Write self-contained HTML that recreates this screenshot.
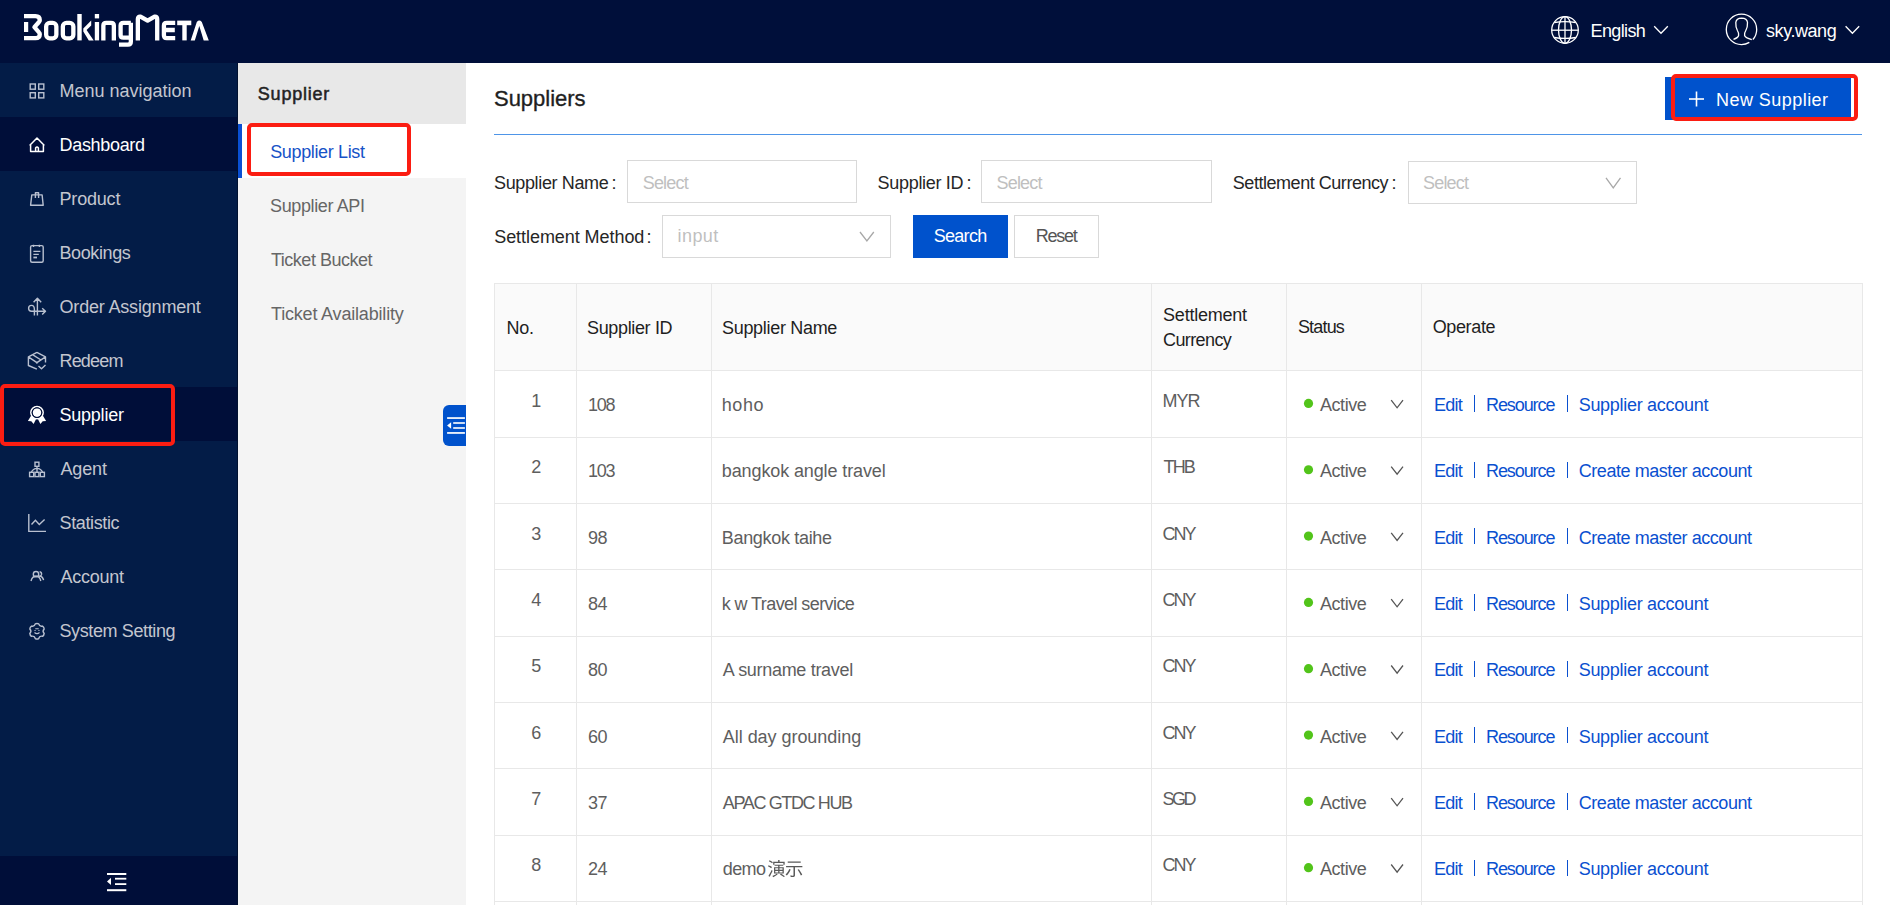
<!DOCTYPE html><html><head><meta charset="utf-8"><style>
html,body{margin:0;padding:0;}
body{width:1890px;height:905px;overflow:hidden;position:relative;background:#fff;font-family:"Liberation Sans",sans-serif;}
.t{position:absolute;white-space:nowrap;}
.r{position:absolute;box-sizing:border-box;}
svg{position:absolute;overflow:visible;}
</style></head><body>
<div class="r" style="left:0px;top:0px;width:1890px;height:63px;background:#000f3a"></div>
<svg style="left:0;top:0" width="240" height="63" viewBox="0 0 240 63">
<g fill="none" stroke="#fff" stroke-width="4.3" stroke-linejoin="round">
<path d="M24,16.2 H35.5 Q39.8,16.2 39.8,20.3 Q39.8,21.3 39,22 L34.4,27.2 L39,32.4 Q39.8,33.2 39.8,34.2 Q39.8,38.2 35.5,38.2 H24"/>
<rect x="46.15" y="22.85" width="10.2" height="15.5" rx="3.6"/>
<rect x="62.85" y="22.85" width="10.5" height="15.5" rx="3.6"/>
<path d="M103.35,40.4 V25.6 Q103.35,22.8 106.2,22.8 H111 Q113.85,22.8 113.85,25.6 V40.4"/>
<path d="M130.85,22.8 H123.4 Q120.6,22.8 120.6,25.6 V35 Q120.6,37.7 123.4,37.7 H130.85 M130.85,22.8 V41.8 Q130.85,44.6 128,44.6 H119"/>
<path d="M137.85,40.4 V19 Q137.85,16.2 140.5,16.6 L147.6,20.6 L154.6,16.6 Q157.2,16.2 157.2,19 V40.4"/>
<path d="M175.2,22.9 H166.7 Q163.9,22.9 163.9,25.7 V35.3 Q163.9,38.1 166.7,38.1 H175.2 M163.9,30 H174.8"/>
</g>
<g fill="#fff">
<rect x="24" y="22" width="4.2" height="10"/>
<rect x="77.3" y="14" width="4.4" height="26.4"/>
<polygon points="91.2,20.6 91.2,25.4 86.6,30 93.7,40.4 88.8,40.4 83.3,31.6 83.3,28.4"/>
<rect x="94.8" y="14" width="4.3" height="4.4"/>
<rect x="94.8" y="22" width="4.3" height="18.4"/>
<rect x="177.2" y="20.6" width="14.1" height="4.6"/>
<rect x="182.3" y="23" width="4.4" height="17.4"/>
<path d="M190.7,40.5 H194.8 L199.3,26 L203.7,40.5 H208.8 L201.8,22 Q199.3,19.2 196.8,22 Z"/>
</g></svg>
<svg style="left:0;top:0" width="1890" height="63" viewBox="0 0 1890 63">
<g fill="none" stroke="#fff" stroke-width="1.3">
<circle cx="1565" cy="30" r="13.3"/>
<ellipse cx="1565" cy="30" rx="6.5" ry="13.3"/>
<line x1="1565" y1="16.7" x2="1565" y2="43.3"/>
<line x1="1551.7" y1="30.2" x2="1578.3" y2="30.2"/>
<path d="M1554.2,22.5 Q1565,20.8 1575.8,22.5"/>
<path d="M1554.2,37.5 Q1565,39.2 1575.8,37.5"/>
<path d="M1654.2,26.3 L1661,33.3 L1667.8,26.3"/>
<circle cx="1741.5" cy="29.4" r="15.2" stroke-dasharray="11 4.5 100"/>
<path d="M1733.5,39.3 Q1738,37.8 1738.6,35.5 Q1739,33 1737.4,30.5 Q1735.6,27.5 1735.8,22.5 Q1736.3,18.2 1741.6,18.1 Q1747,18.2 1747.5,22.5 Q1747.7,27.5 1745.8,30.5 Q1744.2,33 1744.6,35.5 Q1745.3,37.8 1751.8,39.7"/>
<path d="M1845.6,26.3 L1852.4,33.3 L1859.2,26.3"/>
</g></svg>
<div class="t" style="left:1590.50px;top:21.66px;font-size:18px;line-height:18px;color:#fff;font-weight:normal;letter-spacing:-0.617px;">English</div>
<div class="t" style="left:1766.00px;top:21.56px;font-size:18px;line-height:18px;color:#fff;font-weight:normal;letter-spacing:-0.429px;">sky.wang</div>
<div class="r" style="left:0px;top:63px;width:238px;height:842px;background:#031c47"></div>
<div class="r" style="left:237px;top:63px;width:1px;height:842px;background:#01112f"></div>
<div class="r" style="left:0px;top:117px;width:237px;height:54px;background:#000e39"></div>
<div class="r" style="left:0px;top:387px;width:237px;height:54px;background:#000e39"></div>
<div class="r" style="left:0px;top:856px;width:237px;height:49px;background:#000e39"></div>
<div class="t" style="left:59.50px;top:82.06px;font-size:18px;line-height:18px;color:#c3c6cf;font-weight:normal;letter-spacing:-0.014px;">Menu navigation</div>
<div class="t" style="left:59.50px;top:136.06px;font-size:18px;line-height:18px;color:#fff;font-weight:normal;letter-spacing:-0.312px;">Dashboard</div>
<div class="t" style="left:59.50px;top:190.06px;font-size:18px;line-height:18px;color:#c3c6cf;font-weight:normal;letter-spacing:-0.183px;">Product</div>
<div class="t" style="left:59.50px;top:244.06px;font-size:18px;line-height:18px;color:#c3c6cf;font-weight:normal;letter-spacing:-0.400px;">Bookings</div>
<div class="t" style="left:59.50px;top:298.06px;font-size:18px;line-height:18px;color:#c3c6cf;font-weight:normal;letter-spacing:-0.180px;">Order Assignment</div>
<div class="t" style="left:59.50px;top:352.06px;font-size:18px;line-height:18px;color:#c3c6cf;font-weight:normal;letter-spacing:-0.820px;">Redeem</div>
<div class="t" style="left:59.50px;top:406.06px;font-size:18px;line-height:18px;color:#fff;font-weight:normal;letter-spacing:-0.229px;">Supplier</div>
<div class="t" style="left:60.50px;top:460.06px;font-size:18px;line-height:18px;color:#c3c6cf;font-weight:normal;letter-spacing:-0.150px;">Agent</div>
<div class="t" style="left:59.50px;top:514.06px;font-size:18px;line-height:18px;color:#c3c6cf;font-weight:normal;letter-spacing:-0.363px;">Statistic</div>
<div class="t" style="left:60.50px;top:568.06px;font-size:18px;line-height:18px;color:#c3c6cf;font-weight:normal;letter-spacing:-0.267px;">Account</div>
<div class="t" style="left:59.50px;top:622.06px;font-size:18px;line-height:18px;color:#c3c6cf;font-weight:normal;letter-spacing:-0.385px;">System Setting</div>
<svg style="left:0;top:0" width="238" height="905" viewBox="0 0 238 905">
<g fill="none" stroke="#b9c0d0" stroke-width="1.4">
<rect x="30.2" y="84" width="5.1" height="5.2"/><rect x="38.7" y="84" width="5.1" height="5.2"/>
<rect x="30.2" y="92.7" width="5.1" height="5.2"/><rect x="38.7" y="92.7" width="5.1" height="5.2"/>
</g>
<g fill="none" stroke="#fff" stroke-width="1.5" stroke-linejoin="round">
<path d="M29.6,145.5 L37,138 L44.4,145.5 M30.6,144.5 V151.6 H43.4 V144.5 M35.6,151.6 V148 Q37,146 38.4,148 V151.6"/>
</g>
<g fill="none" stroke="#b9c0d0" stroke-width="1.4" stroke-linejoin="round">
<path d="M31.8,194.9 H42.1 L43.2,205.2 H30.6 Z M35.4,198 V192.7 H38.6 V198"/>
<rect x="30.6" y="245.6" width="12.6" height="16.6" rx="1.5"/>
<path d="M33.4,251.4 H40.4 M33.4,254.4 H38.8"/><path d="M33.4,257.5 H37" stroke-width="1.8"/>
<path d="M33.5,244.8 V247 M39.4,244.8 V247"/>
<path d="M37.4,315.5 V298.5 M33.6,302.3 L37.4,298.3 L41.2,302.3 M34.4,315.5 V309.5 Q34.4,305.4 31.5,305.4 Q28.6,305.4 28.6,308.3 Q28.6,311.3 31.5,311.3 H45.5 M42.2,308.2 L45.5,311.3 L42.2,314.5"/>
<path d="M36.9,352.3 L28.4,356.9 V365.5 L36.9,369.2 M36.9,352.3 L45.5,356.9 V362.6 M28.4,356.9 L36.9,362.6 L45.5,356.9 M36.9,362.6 V363.8 M32.5,354.7 L41,360 M38.5,366 L41.5,368.8 L45.5,365"/>
</g>
<g fill="#fff">
<path d="M31.2,415.6 L27.9,420.9 L31.3,421.3 L33.6,424 L36,419.2 Z M42.8,415.6 L46.1,420.9 L42.7,421.3 L40.4,424 L38,419.2 Z"/>
<circle cx="37" cy="412.6" r="4.3"/>
</g>
<g fill="none" stroke="#fff" stroke-width="1.6"><circle cx="37" cy="412.6" r="6.15"/></g>
<g fill="none" stroke="#000e39" stroke-width="0.9"><circle cx="37" cy="412.6" r="4.85"/></g>
<g fill="none" stroke="#b9c0d0" stroke-width="1.4">
<rect x="35" y="462.2" width="3.9" height="4.1"/>
<rect x="29.6" y="472.3" width="4.1" height="4.3"/><rect x="35" y="472.3" width="3.9" height="4.3"/><rect x="40.3" y="472.3" width="4.1" height="4.3"/>
<path d="M37,466.3 V472.3 M31.4,472.3 Q33,468.5 37,468.4 Q41,468.5 42.6,472.3"/>
<path d="M28.8,514 V531.4 H46"/><path d="M31.5,524.5 L35.4,520.2 L39.3,524.5 L44.6,519.5"/>
<path d="M31,581 Q32.2,576.3 36,576 Q39.8,576.3 40.8,581 M39.2,576 Q42.7,576.3 43.6,580.2"/>
<circle cx="36" cy="574.2" r="2.7"/><path d="M39.6,571.6 Q42,572.2 41.5,574.7 Q41.2,576 39.7,576.2"/>
<path d="M35.31,623.89 Q37.00,623.00 38.69,623.89 Q39.50,626.87 42.49,626.09 Q44.10,627.10 44.17,629.01 Q42.00,631.20 44.17,633.39 Q44.10,635.30 42.49,636.31 Q39.50,635.53 38.69,638.51 Q37.00,639.40 35.31,638.51 Q34.50,635.53 31.51,636.31 Q29.90,635.30 29.83,633.39 Q32.00,631.20 29.83,629.01 Q29.90,627.10 31.51,626.09 Q34.50,626.87 35.31,623.89 Z"/>
<path d="M35.3,628.7 H38.7 M34.5,630.5 H35.6 M38.4,630.5 H39.5 M34.5,632.5 Q37,634.8 39.5,632.5" stroke-width="1.1"/>
</g>
<g fill="#fff">
<rect x="107" y="873" width="19.3" height="2"/><rect x="115" y="877.8" width="11.3" height="1.8"/>
<rect x="115" y="883.2" width="11.3" height="1.8"/><rect x="107" y="889.2" width="19.3" height="2"/>
<polygon points="107,881.4 111,877.8 111,885"/>
</g>
</svg>
<div class="r" style="left:0px;top:384px;width:175px;height:62px;border:4.7px solid #fb1d12;border-radius:5px;"></div>
<div class="r" style="left:238px;top:63px;width:228px;height:842px;background:#f4f4f4"></div>
<div class="r" style="left:238px;top:63px;width:228px;height:60.5px;background:#e8e8e8"></div>
<div class="r" style="left:238px;top:123.5px;width:228px;height:54px;background:#fff"></div>
<div class="r" style="left:238px;top:123.5px;width:4px;height:54px;background:#0a4fd3"></div>
<div class="t" style="left:257.80px;top:84.96px;font-size:18px;line-height:18px;color:#222;font-weight:normal;letter-spacing:0.786px;-webkit-text-stroke:0.5px #222;">Supplier</div>
<div class="t" style="left:270.20px;top:142.56px;font-size:18px;line-height:18px;color:#1652c7;font-weight:normal;letter-spacing:-0.358px;">Supplier List</div>
<div class="t" style="left:270.00px;top:196.96px;font-size:18px;line-height:18px;color:#666;font-weight:normal;letter-spacing:-0.373px;">Supplier API</div>
<div class="t" style="left:271.00px;top:250.96px;font-size:18px;line-height:18px;color:#666;font-weight:normal;letter-spacing:-0.492px;">Ticket Bucket</div>
<div class="t" style="left:271.00px;top:304.96px;font-size:18px;line-height:18px;color:#666;font-weight:normal;letter-spacing:-0.183px;">Ticket Availability</div>
<div class="r" style="left:247px;top:123px;width:164px;height:53px;border:4.7px solid #fb1d12;border-radius:5px;"></div>
<div class="r" style="left:443px;top:405px;width:23px;height:41px;background:#0052cc;border-radius:6px 0 0 6px;"></div>
<svg style="left:0;top:0" width="470" height="460" viewBox="0 0 470 460"><g fill="#fff">
<rect x="447.1" y="417.2" width="17.8" height="1.7"/><rect x="453.2" y="422.2" width="11.7" height="1.6"/>
<rect x="453.2" y="427.2" width="11.7" height="1.6"/><rect x="447.1" y="432.1" width="17.8" height="1.7"/>
<polygon points="447.1,425.5 451.1,422.2 451.1,428.8"/></g></svg>
<div class="t" style="left:494.00px;top:88.08px;font-size:22px;line-height:22px;color:#1f1f1f;font-weight:normal;letter-spacing:-0.025px;-webkit-text-stroke:0.35px #1f1f1f;">Suppliers</div>
<div class="r" style="left:494px;top:134px;width:1368px;height:1px;background:#4e95e8"></div>
<div class="r" style="left:1665px;top:77px;width:185.5px;height:43px;background:#0052cc"></div>
<svg style="left:0;top:0" width="1890" height="140" viewBox="0 0 1890 140"><g stroke="#fff" stroke-width="1.6">
<line x1="1689" y1="99" x2="1704" y2="99"/><line x1="1696.5" y1="91.5" x2="1696.5" y2="106.5"/></g></svg>
<div class="t" style="left:1716.00px;top:90.96px;font-size:18px;line-height:18px;color:#fff;font-weight:normal;letter-spacing:0.455px;">New Supplier</div>
<div class="r" style="left:1671px;top:74px;width:187px;height:47px;border:4.7px solid #fb1d12;border-radius:5px;"></div>
<div class="t" style="left:494.00px;top:173.76px;font-size:18px;line-height:18px;color:#262626;font-weight:normal;letter-spacing:-0.358px;">Supplier Name</div>
<div class="t" style="left:611.50px;top:173.76px;font-size:18px;line-height:18px;color:#262626;font-weight:normal;letter-spacing:0.000px;">:</div>
<div class="r" style="left:627px;top:160px;width:230px;height:43px;border:1px solid #d9d9d9"></div>
<div class="t" style="left:642.70px;top:173.76px;font-size:18px;line-height:18px;color:#bfbfbf;font-weight:normal;letter-spacing:-0.800px;">Select</div>
<div class="t" style="left:877.60px;top:173.76px;font-size:18px;line-height:18px;color:#262626;font-weight:normal;letter-spacing:-0.310px;">Supplier ID</div>
<div class="t" style="left:966.50px;top:173.76px;font-size:18px;line-height:18px;color:#262626;font-weight:normal;letter-spacing:0.000px;">:</div>
<div class="r" style="left:981px;top:160px;width:231px;height:43px;border:1px solid #d9d9d9"></div>
<div class="t" style="left:996.50px;top:173.76px;font-size:18px;line-height:18px;color:#bfbfbf;font-weight:normal;letter-spacing:-0.800px;">Select</div>
<div class="t" style="left:1232.80px;top:173.76px;font-size:18px;line-height:18px;color:#262626;font-weight:normal;letter-spacing:-0.461px;">Settlement Currency</div>
<div class="t" style="left:1391.60px;top:173.76px;font-size:18px;line-height:18px;color:#262626;font-weight:normal;letter-spacing:0.000px;">:</div>
<div class="r" style="left:1408px;top:161px;width:229px;height:43px;border:1px solid #d9d9d9"></div>
<div class="t" style="left:1423.00px;top:174.26px;font-size:18px;line-height:18px;color:#bfbfbf;font-weight:normal;letter-spacing:-0.800px;">Select</div>
<div class="t" style="left:494.20px;top:227.66px;font-size:18px;line-height:18px;color:#262626;font-weight:normal;letter-spacing:-0.056px;">Settlement Method</div>
<div class="t" style="left:646.60px;top:227.66px;font-size:18px;line-height:18px;color:#262626;font-weight:normal;letter-spacing:0.000px;">:</div>
<div class="r" style="left:662px;top:215px;width:229px;height:43px;border:1px solid #d9d9d9"></div>
<div class="t" style="left:677.50px;top:227.06px;font-size:18px;line-height:18px;color:#bfbfbf;font-weight:normal;letter-spacing:0.450px;">input</div>
<div class="r" style="left:913px;top:215px;width:95px;height:43px;background:#0052cc"></div>
<div class="t" style="left:933.70px;top:227.06px;font-size:18px;line-height:18px;color:#fff;font-weight:normal;letter-spacing:-0.700px;">Search</div>
<div class="r" style="left:1014px;top:215px;width:85px;height:43px;border:1px solid #d9d9d9"></div>
<div class="t" style="left:1035.70px;top:227.06px;font-size:18px;line-height:18px;color:#555;font-weight:normal;letter-spacing:-1.250px;">Reset</div>
<div class="r" style="left:494px;top:283px;width:1368.2px;height:87.4px;background:#fafafa"></div>
<div class="r" style="left:494px;top:283px;width:1368.2px;height:1px;background:#e8e8e8"></div>
<div class="r" style="left:494px;top:370.4px;width:1368.2px;height:1px;background:#e8e8e8"></div>
<div class="r" style="left:494px;top:436.73px;width:1368.2px;height:1px;background:#e8e8e8"></div>
<div class="r" style="left:494px;top:503.06px;width:1368.2px;height:1px;background:#e8e8e8"></div>
<div class="r" style="left:494px;top:569.39px;width:1368.2px;height:1px;background:#e8e8e8"></div>
<div class="r" style="left:494px;top:635.72px;width:1368.2px;height:1px;background:#e8e8e8"></div>
<div class="r" style="left:494px;top:702.05px;width:1368.2px;height:1px;background:#e8e8e8"></div>
<div class="r" style="left:494px;top:768.38px;width:1368.2px;height:1px;background:#e8e8e8"></div>
<div class="r" style="left:494px;top:834.71px;width:1368.2px;height:1px;background:#e8e8e8"></div>
<div class="r" style="left:494px;top:901.04px;width:1368.2px;height:1px;background:#e8e8e8"></div>
<div class="r" style="left:493.5px;top:283px;width:1px;height:622px;background:#e8e8e8"></div>
<div class="r" style="left:576.0px;top:283px;width:1px;height:622px;background:#e8e8e8"></div>
<div class="r" style="left:710.8px;top:283px;width:1px;height:622px;background:#e8e8e8"></div>
<div class="r" style="left:1151.0px;top:283px;width:1px;height:622px;background:#e8e8e8"></div>
<div class="r" style="left:1285.8px;top:283px;width:1px;height:622px;background:#e8e8e8"></div>
<div class="r" style="left:1420.9px;top:283px;width:1px;height:622px;background:#e8e8e8"></div>
<div class="r" style="left:1861.7px;top:283px;width:1px;height:622px;background:#e8e8e8"></div>
<div class="t" style="left:506.40px;top:318.96px;font-size:18px;line-height:18px;color:#1f1f1f;font-weight:normal;letter-spacing:-0.200px;">No.</div>
<div class="t" style="left:587.00px;top:318.96px;font-size:18px;line-height:18px;color:#1f1f1f;font-weight:normal;letter-spacing:-0.350px;">Supplier ID</div>
<div class="t" style="left:722.00px;top:318.96px;font-size:18px;line-height:18px;color:#1f1f1f;font-weight:normal;letter-spacing:-0.308px;">Supplier Name</div>
<div class="t" style="left:1163.10px;top:305.56px;font-size:18px;line-height:18px;color:#1f1f1f;font-weight:normal;letter-spacing:-0.233px;">Settlement</div>
<div class="t" style="left:1163.00px;top:331.46px;font-size:18px;line-height:18px;color:#1f1f1f;font-weight:normal;letter-spacing:-0.600px;">Currency</div>
<div class="t" style="left:1297.90px;top:318.46px;font-size:18px;line-height:18px;color:#1f1f1f;font-weight:normal;letter-spacing:-0.820px;">Status</div>
<div class="t" style="left:1432.70px;top:318.46px;font-size:18px;line-height:18px;color:#1f1f1f;font-weight:normal;letter-spacing:-0.367px;">Operate</div>
<div class="t" style="left:495px;width:82.5px;text-align:center;top:391.86px;font-size:18px;line-height:18px;color:#5e5e5e">1</div>
<div class="t" style="left:588.00px;top:395.86px;font-size:18px;line-height:18px;color:#5e5e5e;font-weight:normal;letter-spacing:-1.300px;">108</div>
<div class="t" style="left:721.80px;top:395.86px;font-size:18px;line-height:18px;color:#5e5e5e;font-weight:normal;letter-spacing:0.567px;">hoho</div>
<div class="t" style="left:1162.50px;top:391.86px;font-size:18px;line-height:18px;color:#5e5e5e;font-weight:normal;letter-spacing:-1.000px;">MYR</div>
<div class="t" style="left:1320.00px;top:395.86px;font-size:18px;line-height:18px;color:#5e5e5e;font-weight:normal;letter-spacing:-0.460px;">Active</div>
<div class="t" style="left:1433.90px;top:395.86px;font-size:18px;line-height:18px;color:#0a50d0;font-weight:normal;letter-spacing:-0.700px;">Edit</div>
<div class="r" style="left:1473.8px;top:395.4px;width:1.5px;height:16.3px;background:#0a50d0"></div>
<div class="t" style="left:1486.00px;top:395.86px;font-size:18px;line-height:18px;color:#0a50d0;font-weight:normal;letter-spacing:-1.086px;">Resource</div>
<div class="r" style="left:1566.5px;top:395.4px;width:1.5px;height:16.3px;background:#0a50d0"></div>
<div class="t" style="left:1578.70px;top:395.86px;font-size:18px;line-height:18px;color:#0a50d0;font-weight:normal;letter-spacing:-0.293px;">Supplier account</div>
<div class="t" style="left:495px;width:82.5px;text-align:center;top:458.19px;font-size:18px;line-height:18px;color:#5e5e5e">2</div>
<div class="t" style="left:588.00px;top:462.19px;font-size:18px;line-height:18px;color:#5e5e5e;font-weight:normal;letter-spacing:-1.300px;">103</div>
<div class="t" style="left:721.80px;top:462.19px;font-size:18px;line-height:18px;color:#5e5e5e;font-weight:normal;letter-spacing:-0.116px;">bangkok angle travel</div>
<div class="t" style="left:1163.50px;top:458.19px;font-size:18px;line-height:18px;color:#5e5e5e;font-weight:normal;letter-spacing:-1.850px;">THB</div>
<div class="t" style="left:1320.00px;top:462.19px;font-size:18px;line-height:18px;color:#5e5e5e;font-weight:normal;letter-spacing:-0.460px;">Active</div>
<div class="t" style="left:1433.90px;top:462.19px;font-size:18px;line-height:18px;color:#0a50d0;font-weight:normal;letter-spacing:-0.700px;">Edit</div>
<div class="r" style="left:1473.8px;top:461.73px;width:1.5px;height:16.3px;background:#0a50d0"></div>
<div class="t" style="left:1486.00px;top:462.19px;font-size:18px;line-height:18px;color:#0a50d0;font-weight:normal;letter-spacing:-1.086px;">Resource</div>
<div class="r" style="left:1566.5px;top:461.73px;width:1.5px;height:16.3px;background:#0a50d0"></div>
<div class="t" style="left:1578.70px;top:462.19px;font-size:18px;line-height:18px;color:#0a50d0;font-weight:normal;letter-spacing:-0.435px;">Create master account</div>
<div class="t" style="left:495px;width:82.5px;text-align:center;top:524.52px;font-size:18px;line-height:18px;color:#5e5e5e">3</div>
<div class="t" style="left:588.00px;top:528.52px;font-size:18px;line-height:18px;color:#5e5e5e;font-weight:normal;letter-spacing:-0.500px;">98</div>
<div class="t" style="left:721.80px;top:528.52px;font-size:18px;line-height:18px;color:#5e5e5e;font-weight:normal;letter-spacing:-0.317px;">Bangkok taihe</div>
<div class="t" style="left:1162.50px;top:524.52px;font-size:18px;line-height:18px;color:#5e5e5e;font-weight:normal;letter-spacing:-2.000px;">CNY</div>
<div class="t" style="left:1320.00px;top:528.52px;font-size:18px;line-height:18px;color:#5e5e5e;font-weight:normal;letter-spacing:-0.460px;">Active</div>
<div class="t" style="left:1433.90px;top:528.52px;font-size:18px;line-height:18px;color:#0a50d0;font-weight:normal;letter-spacing:-0.700px;">Edit</div>
<div class="r" style="left:1473.8px;top:528.06px;width:1.5px;height:16.3px;background:#0a50d0"></div>
<div class="t" style="left:1486.00px;top:528.52px;font-size:18px;line-height:18px;color:#0a50d0;font-weight:normal;letter-spacing:-1.086px;">Resource</div>
<div class="r" style="left:1566.5px;top:528.06px;width:1.5px;height:16.3px;background:#0a50d0"></div>
<div class="t" style="left:1578.70px;top:528.52px;font-size:18px;line-height:18px;color:#0a50d0;font-weight:normal;letter-spacing:-0.435px;">Create master account</div>
<div class="t" style="left:495px;width:82.5px;text-align:center;top:590.85px;font-size:18px;line-height:18px;color:#5e5e5e">4</div>
<div class="t" style="left:588.00px;top:594.85px;font-size:18px;line-height:18px;color:#5e5e5e;font-weight:normal;letter-spacing:-0.500px;">84</div>
<div class="t" style="left:721.80px;top:594.85px;font-size:18px;line-height:18px;color:#5e5e5e;font-weight:normal;letter-spacing:-0.588px;">k w Travel service</div>
<div class="t" style="left:1162.50px;top:590.85px;font-size:18px;line-height:18px;color:#5e5e5e;font-weight:normal;letter-spacing:-2.000px;">CNY</div>
<div class="t" style="left:1320.00px;top:594.85px;font-size:18px;line-height:18px;color:#5e5e5e;font-weight:normal;letter-spacing:-0.460px;">Active</div>
<div class="t" style="left:1433.90px;top:594.85px;font-size:18px;line-height:18px;color:#0a50d0;font-weight:normal;letter-spacing:-0.700px;">Edit</div>
<div class="r" style="left:1473.8px;top:594.39px;width:1.5px;height:16.3px;background:#0a50d0"></div>
<div class="t" style="left:1486.00px;top:594.85px;font-size:18px;line-height:18px;color:#0a50d0;font-weight:normal;letter-spacing:-1.086px;">Resource</div>
<div class="r" style="left:1566.5px;top:594.39px;width:1.5px;height:16.3px;background:#0a50d0"></div>
<div class="t" style="left:1578.70px;top:594.85px;font-size:18px;line-height:18px;color:#0a50d0;font-weight:normal;letter-spacing:-0.293px;">Supplier account</div>
<div class="t" style="left:495px;width:82.5px;text-align:center;top:657.18px;font-size:18px;line-height:18px;color:#5e5e5e">5</div>
<div class="t" style="left:588.00px;top:661.18px;font-size:18px;line-height:18px;color:#5e5e5e;font-weight:normal;letter-spacing:-0.500px;">80</div>
<div class="t" style="left:722.80px;top:661.18px;font-size:18px;line-height:18px;color:#5e5e5e;font-weight:normal;letter-spacing:-0.313px;">A surname travel</div>
<div class="t" style="left:1162.50px;top:657.18px;font-size:18px;line-height:18px;color:#5e5e5e;font-weight:normal;letter-spacing:-2.000px;">CNY</div>
<div class="t" style="left:1320.00px;top:661.18px;font-size:18px;line-height:18px;color:#5e5e5e;font-weight:normal;letter-spacing:-0.460px;">Active</div>
<div class="t" style="left:1433.90px;top:661.18px;font-size:18px;line-height:18px;color:#0a50d0;font-weight:normal;letter-spacing:-0.700px;">Edit</div>
<div class="r" style="left:1473.8px;top:660.72px;width:1.5px;height:16.3px;background:#0a50d0"></div>
<div class="t" style="left:1486.00px;top:661.18px;font-size:18px;line-height:18px;color:#0a50d0;font-weight:normal;letter-spacing:-1.086px;">Resource</div>
<div class="r" style="left:1566.5px;top:660.72px;width:1.5px;height:16.3px;background:#0a50d0"></div>
<div class="t" style="left:1578.70px;top:661.18px;font-size:18px;line-height:18px;color:#0a50d0;font-weight:normal;letter-spacing:-0.293px;">Supplier account</div>
<div class="t" style="left:495px;width:82.5px;text-align:center;top:723.51px;font-size:18px;line-height:18px;color:#5e5e5e">6</div>
<div class="t" style="left:588.00px;top:727.51px;font-size:18px;line-height:18px;color:#5e5e5e;font-weight:normal;letter-spacing:-0.500px;">60</div>
<div class="t" style="left:722.80px;top:727.51px;font-size:18px;line-height:18px;color:#5e5e5e;font-weight:normal;letter-spacing:-0.044px;">All day grounding</div>
<div class="t" style="left:1162.50px;top:723.51px;font-size:18px;line-height:18px;color:#5e5e5e;font-weight:normal;letter-spacing:-2.000px;">CNY</div>
<div class="t" style="left:1320.00px;top:727.51px;font-size:18px;line-height:18px;color:#5e5e5e;font-weight:normal;letter-spacing:-0.460px;">Active</div>
<div class="t" style="left:1433.90px;top:727.51px;font-size:18px;line-height:18px;color:#0a50d0;font-weight:normal;letter-spacing:-0.700px;">Edit</div>
<div class="r" style="left:1473.8px;top:727.05px;width:1.5px;height:16.3px;background:#0a50d0"></div>
<div class="t" style="left:1486.00px;top:727.51px;font-size:18px;line-height:18px;color:#0a50d0;font-weight:normal;letter-spacing:-1.086px;">Resource</div>
<div class="r" style="left:1566.5px;top:727.05px;width:1.5px;height:16.3px;background:#0a50d0"></div>
<div class="t" style="left:1578.70px;top:727.51px;font-size:18px;line-height:18px;color:#0a50d0;font-weight:normal;letter-spacing:-0.293px;">Supplier account</div>
<div class="t" style="left:495px;width:82.5px;text-align:center;top:789.84px;font-size:18px;line-height:18px;color:#5e5e5e">7</div>
<div class="t" style="left:588.00px;top:793.84px;font-size:18px;line-height:18px;color:#5e5e5e;font-weight:normal;letter-spacing:-0.500px;">37</div>
<div class="t" style="left:722.80px;top:793.84px;font-size:18px;line-height:18px;color:#5e5e5e;font-weight:normal;letter-spacing:-1.367px;">APAC GTDC HUB</div>
<div class="t" style="left:1162.50px;top:789.84px;font-size:18px;line-height:18px;color:#5e5e5e;font-weight:normal;letter-spacing:-2.500px;">SGD</div>
<div class="t" style="left:1320.00px;top:793.84px;font-size:18px;line-height:18px;color:#5e5e5e;font-weight:normal;letter-spacing:-0.460px;">Active</div>
<div class="t" style="left:1433.90px;top:793.84px;font-size:18px;line-height:18px;color:#0a50d0;font-weight:normal;letter-spacing:-0.700px;">Edit</div>
<div class="r" style="left:1473.8px;top:793.38px;width:1.5px;height:16.3px;background:#0a50d0"></div>
<div class="t" style="left:1486.00px;top:793.84px;font-size:18px;line-height:18px;color:#0a50d0;font-weight:normal;letter-spacing:-1.086px;">Resource</div>
<div class="r" style="left:1566.5px;top:793.38px;width:1.5px;height:16.3px;background:#0a50d0"></div>
<div class="t" style="left:1578.70px;top:793.84px;font-size:18px;line-height:18px;color:#0a50d0;font-weight:normal;letter-spacing:-0.435px;">Create master account</div>
<div class="t" style="left:495px;width:82.5px;text-align:center;top:856.17px;font-size:18px;line-height:18px;color:#5e5e5e">8</div>
<div class="t" style="left:588.00px;top:860.17px;font-size:18px;line-height:18px;color:#5e5e5e;font-weight:normal;letter-spacing:-0.500px;">24</div>
<div class="t" style="left:722.80px;top:860.17px;font-size:18px;line-height:18px;color:#5e5e5e;font-weight:normal;letter-spacing:-0.633px;">demo</div>
<div class="t" style="left:1162.50px;top:856.17px;font-size:18px;line-height:18px;color:#5e5e5e;font-weight:normal;letter-spacing:-2.000px;">CNY</div>
<div class="t" style="left:1320.00px;top:860.17px;font-size:18px;line-height:18px;color:#5e5e5e;font-weight:normal;letter-spacing:-0.460px;">Active</div>
<div class="t" style="left:1433.90px;top:860.17px;font-size:18px;line-height:18px;color:#0a50d0;font-weight:normal;letter-spacing:-0.700px;">Edit</div>
<div class="r" style="left:1473.8px;top:859.71px;width:1.5px;height:16.3px;background:#0a50d0"></div>
<div class="t" style="left:1486.00px;top:860.17px;font-size:18px;line-height:18px;color:#0a50d0;font-weight:normal;letter-spacing:-1.086px;">Resource</div>
<div class="r" style="left:1566.5px;top:859.71px;width:1.5px;height:16.3px;background:#0a50d0"></div>
<div class="t" style="left:1578.70px;top:860.17px;font-size:18px;line-height:18px;color:#0a50d0;font-weight:normal;letter-spacing:-0.293px;">Supplier account</div>
<svg style="left:0;top:0" width="1890" height="905" viewBox="0 0 1890 905"><path d="M1606,177.8 L1613.25,188 L1620.5,177.8" stroke="#a8a8a8" stroke-width="1.3" fill="none"/><path d="M860,232 L866.9,241 L873.8,232" stroke="#a8a8a8" stroke-width="1.3" fill="none"/><path d="M1391.2,400.2 L1397.1,407.8 L1403,400.2" stroke="#555" stroke-width="1.3" fill="none"/><path d="M1391.2,466.53 L1397.1,474.13 L1403,466.53" stroke="#555" stroke-width="1.3" fill="none"/><path d="M1391.2,532.86 L1397.1,540.46 L1403,532.86" stroke="#555" stroke-width="1.3" fill="none"/><path d="M1391.2,599.19 L1397.1,606.79 L1403,599.19" stroke="#555" stroke-width="1.3" fill="none"/><path d="M1391.2,665.52 L1397.1,673.12 L1403,665.52" stroke="#555" stroke-width="1.3" fill="none"/><path d="M1391.2,731.85 L1397.1,739.45 L1403,731.85" stroke="#555" stroke-width="1.3" fill="none"/><path d="M1391.2,798.18 L1397.1,805.78 L1403,798.18" stroke="#555" stroke-width="1.3" fill="none"/><path d="M1391.2,864.51 L1397.1,872.11 L1403,864.51" stroke="#555" stroke-width="1.3" fill="none"/><circle cx="1308.5" cy="403.40" r="4.6" fill="#52c41a"/><circle cx="1308.5" cy="469.73" r="4.6" fill="#52c41a"/><circle cx="1308.5" cy="536.06" r="4.6" fill="#52c41a"/><circle cx="1308.5" cy="602.39" r="4.6" fill="#52c41a"/><circle cx="1308.5" cy="668.72" r="4.6" fill="#52c41a"/><circle cx="1308.5" cy="735.05" r="4.6" fill="#52c41a"/><circle cx="1308.5" cy="801.38" r="4.6" fill="#52c41a"/><circle cx="1308.5" cy="867.71" r="4.6" fill="#52c41a"/><g fill="#595959"><path transform="matrix(0.0185,0,0,-0.0185,767.197,875.6)" d="M690 62C761 20 854 -42 899 -82L958 -37C909 3 816 62 746 101ZM501 95C447 47 355 1 274 -28C290 -41 319 -69 331 -83C411 -47 509 11 572 68ZM88 777C150 749 226 701 264 665L307 727C269 761 192 806 130 832ZM38 506C101 480 177 435 215 402L259 465C220 497 142 539 79 563ZM66 -21 132 -67C185 26 248 153 295 260L237 305C185 190 115 57 66 -21ZM592 840V745H323V582H392V681H874V582H945V745H667V840ZM437 255H594V170H437ZM665 255H828V170H665ZM437 396H594V311H437ZM665 396H828V311H665ZM400 591V529H594V454H370V111H898V454H665V529H869V591Z"/><path transform="matrix(0.0185,0,0,-0.0185,784.952,875.6)" d="M234 351C191 238 117 127 35 56C54 46 88 24 104 11C183 88 262 207 311 330ZM684 320C756 224 832 94 859 10L934 44C904 129 826 255 753 349ZM149 766V692H853V766ZM60 523V449H461V19C461 3 455 -1 437 -2C418 -3 352 -3 284 0C296 -23 308 -56 311 -79C400 -79 459 -78 494 -66C530 -53 542 -31 542 18V449H941V523Z"/></g></svg>
</body></html>
